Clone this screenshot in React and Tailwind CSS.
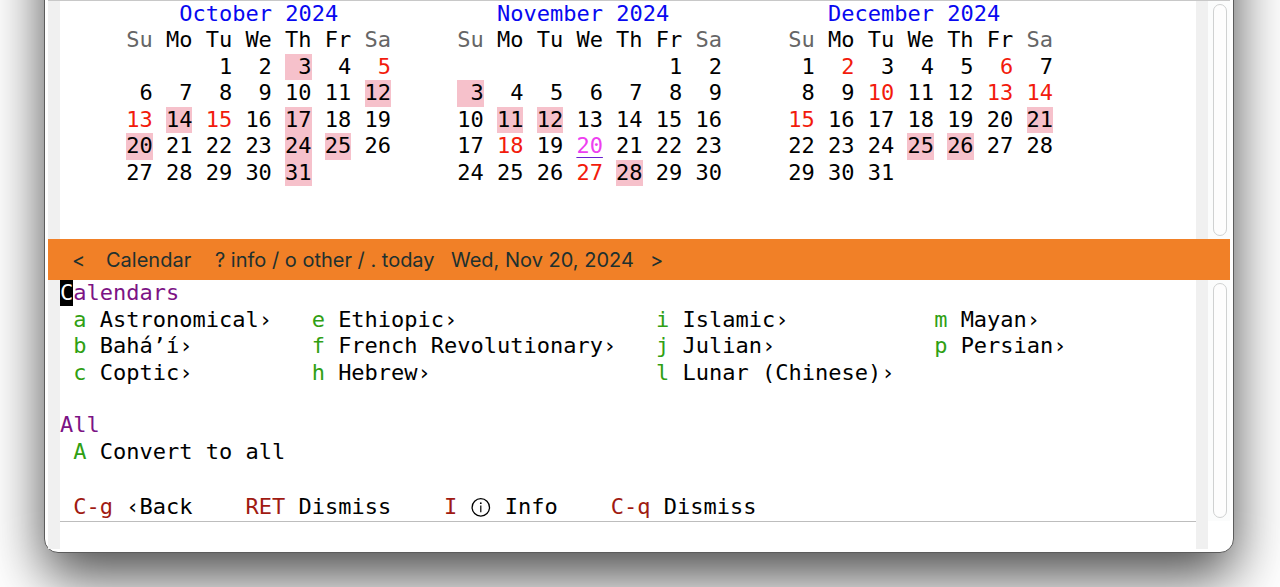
import React from "react";

const DAYS = ["Su", "Mo", "Tu", "We", "Th", "Fr", "Sa"];

const MONTHS = [
  { name: "October 2024", indent: "pl-[4ch]", start: 2, count: 31, marked: [3, 12, 14, 17, 20, 24, 25, 31], holidays: [5, 13, 15] },
  { name: "November 2024", indent: "pl-[3ch]", start: 5, count: 30, marked: [3, 11, 12, 28], holidays: [18, 27], today: 20 },
  { name: "December 2024", indent: "pl-[3ch]", start: 0, count: 31, marked: [21, 25, 26], holidays: [2, 6, 10, 13, 14, 15] },
];

const CALENDARS = [
  [["a", "Astronomical›"], ["b", "Bahá’í›"], ["c", "Coptic›"]],
  [["e", "Ethiopic›"], ["f", "French Revolutionary›"], ["h", "Hebrew›"]],
  [["i", "Islamic›"], ["j", "Julian›"], ["l", "Lunar (Chinese)›"]],
  [["m", "Mayan›"], ["p", "Persian›"]],
];

function weeksOf(month) {
  const cells = [...Array(month.start).fill(null)];
  for (let d = 1; d <= month.count; d++) cells.push(d);
  while (cells.length < 35) cells.push(null);
  return [0, 1, 2, 3, 4].map((w) => cells.slice(w * 7, w * 7 + 7));
}

function dayClass(month, day) {
  if (month.marked.includes(day)) return "bg-[#f6c1cb]";
  if (month.holidays.includes(day)) return "text-[#f21b0c]";
  if (month.today === day) return "text-[#ee3ff0]";
  return "";
}

function Month({ month }) {
  const row = "grid grid-cols-[repeat(7,2ch)] gap-x-[1ch]";
  return (
    <table className="grid h-[185px] auto-rows-fr">
      <caption className={`text-left text-[#0808f0] ${month.indent}`}>{month.name}</caption>
      <thead className="contents">
        <tr className={row}>
          {DAYS.map((d) => (
            <th key={d} className={d[0] === "S" ? "font-normal text-[#666]" : "font-normal"}>{d}</th>
          ))}
        </tr>
      </thead>
      <tbody className="contents">
        {weeksOf(month).map((week, i) => (
          <tr key={i} className={row}>
            {week.map((day, j) => (
              <td key={j} className={`text-right ${dayClass(month, day)}`}>
                {day !== null && day === month.today ? (
                  <span className="underline decoration-[#6a1fd0] decoration-1 underline-offset-4">{day}</span>
                ) : (
                  day
                )}
              </td>
            ))}
          </tr>
        ))}
      </tbody>
    </table>
  );
}

function Command({ keys, keyClass, children }) {
  return (
    <button type="button" className="flex items-center gap-[1ch] whitespace-pre text-left">
      <span className={keyClass}>{keys}</span>
      {children}
    </button>
  );
}

function Fringe() {
  return <div className="w-3 shrink-0 bg-[#f0f0f0]" />;
}

function Scrollbar() {
  return (
    <div className="flex w-[22px] grow justify-center bg-[#fbfcfc] pt-[3px] pb-[3px] pl-px">
      <div className="w-[14px] rounded-full border border-[#cfd1d1] bg-[#fdfdfd]" />
    </div>
  );
}

export default function App() {
  return (
    <div className="min-h-screen overflow-hidden bg-white pr-[46px] pb-[34px] pl-11">
      <main className="-mt-32 rounded-[14px] border border-[#5c5c5c] bg-white px-[3px] pt-[127px] pb-[3px] font-['DejaVu_Sans_Mono','Liberation_Mono',monospace] text-[22px] leading-[26px] text-black shadow-[0_24px_56px_rgba(0,0,0,0.7)]">
        <section className="flex h-[239px] border-t border-[#c8c8c8]" aria-label="Three-month calendar">
          <Fringe />
          <div className="flex grow gap-[5ch] pl-[5ch]">
            {MONTHS.map((m) => (
              <Month key={m.name} month={m} />
            ))}
          </div>
          <Fringe />
          <div className="flex">
            <Scrollbar />
          </div>
        </section>

        <nav className="flex h-[41px] items-center bg-[#f18027] pl-6 font-[Inter,sans-serif] text-[20px] whitespace-nowrap text-[#20302f]">
          <button type="button" aria-label="Previous" className="w-[34px] text-left">&lt;</button>
          <span className="w-[109px]">Calendar</span>
          <span className="w-[236px]">? info / o other / . today</span>
          <span className="w-[199px]">Wed, Nov 20, 2024</span>
          <button type="button" aria-label="Next">&gt;</button>
        </nav>

        <section className="flex" aria-label="Calendars menu">
          <Fringe />
          <div className="grow">
            <div className="grid h-[106px] grid-rows-4">
              <h2 className="text-[#7c1385]">
                <span className="inline-block bg-black text-white">C</span>alendars
              </h2>
              <div className="row-span-3 grid grid-cols-[18ch_26ch_21ch_auto] pl-[1ch]">
                {CALENDARS.map((col, i) => (
                  <div key={i} className="grid grid-rows-3">
                    {col.map(([k, label]) => (
                      <Command key={k} keys={k} keyClass="text-[#309f14]">{label}</Command>
                    ))}
                  </div>
                ))}
              </div>
            </div>
            <div className="mt-[26px] grid h-[53px] grid-rows-2">
              <h2 className="text-[#7c1385]">All</h2>
              <div className="flex pl-[1ch]">
                <Command keys="A" keyClass="text-[#309f14]">Convert to all</Command>
              </div>
            </div>
            <div className="mt-[27px] flex h-[30px] gap-[4ch] border-b border-[#bdbdbd] pl-[1ch]">
              <Command keys="C-g" keyClass="text-[#a01a12]">‹Back</Command>
              <Command keys="RET" keyClass="text-[#a01a12]">Dismiss</Command>
              <Command keys="I" keyClass="text-[#a01a12]">
                <svg viewBox="0 0 21 21" className="w-[21px]" fill="none" stroke="currentColor" aria-hidden="true">
                  <circle cx="9.8" cy="11.4" r="8.7" strokeWidth="1.3" />
                  <path d="M9.8 9.4v6.8" strokeWidth="1.2" />
                  <circle cx="9.8" cy="7.2" r="0.9" fill="currentColor" stroke="none" />
                </svg>
                <span>Info</span>
              </Command>
              <Command keys="C-q" keyClass="text-[#a01a12]">Dismiss</Command>
            </div>
            <div className="h-[27px]" />
          </div>
          <Fringe />
          <div className="flex pb-[28px]">
            <Scrollbar />
          </div>
        </section>
      </main>
    </div>
  );
}
